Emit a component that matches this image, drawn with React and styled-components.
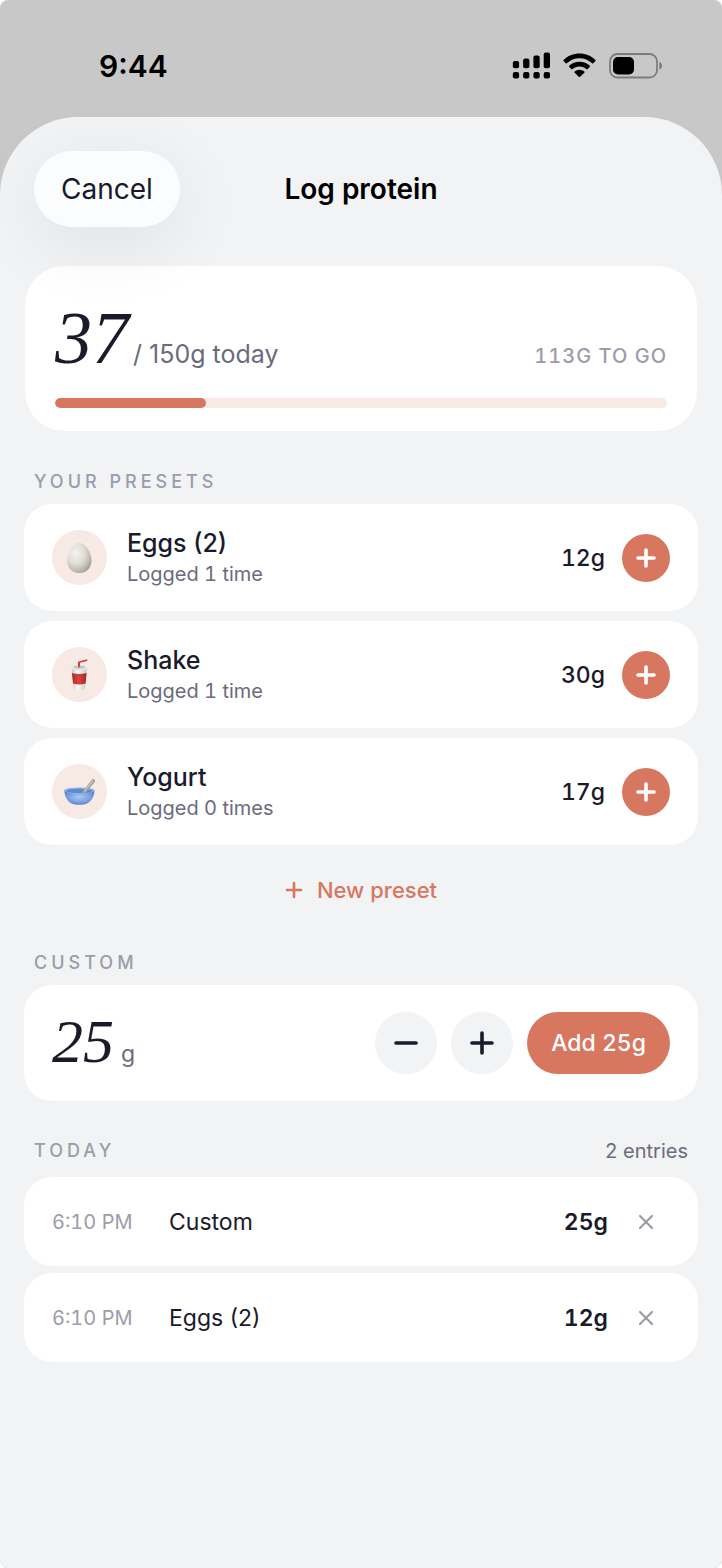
import React, { useState } from "react";
import styled, { createGlobalStyle } from "styled-components";

const ink = "#1a1a2a";
const slate = "#6b6b7c";
const mute = "#9c9cab";
const coral = "#d8775f";
const blush = "#f7e9e4";
const mist = "#f2f3f5";

const GlobalStyle = createGlobalStyle`
  *, *::before, *::after { box-sizing: border-box; }
  html, body, #root { height: 100%; }
  body { margin: 0; background: #fff; color: ${ink}; font-family: Inter, "Liberation Sans", sans-serif; }
  button { font: inherit; color: inherit; border: 0; padding: 0; background: none; cursor: pointer; }
  h1, h2, p, ul { margin: 0; padding: 0; font-weight: inherit; font-size: inherit; }
  ul { list-style: none; }
  svg { display: block; }
`;

const Screen = styled.div`
  min-height: 100%;
  display: flex;
  flex-direction: column;
  background: #c8c8c8;
  border-radius: 8px;
  overflow: hidden;
`;

const StatusBar = styled.header`
  display: flex;
  align-items: center;
  justify-content: space-between;
  height: 117px;
  padding: 14px 59px 0 99px;
  color: #000;
`;

const Clock = styled.span`
  font-size: 30px;
  line-height: 40px;
  font-weight: 600;
`;

const StatusIcons = styled.div`
  display: flex;
  align-items: center;
  gap: 13px;
`;

const Sheet = styled.main`
  flex: 1;
  background: ${mist};
  border-radius: 78px 78px 0 0;
  padding: 34px 24px;
`;

const TopBar = styled.div`
  display: grid;
  grid-template-columns: 1fr auto 1fr;
  align-items: center;
  padding: 0 10px;
`;

const CancelButton = styled.button`
  justify-self: start;
  height: 76px;
  padding: 0 27px;
  border-radius: 38px;
  background: #fbfcfe;
  box-shadow: 0 16px 72px rgba(0, 0, 0, 0.08);
  font-size: 28px;
`;

const Title = styled.h1`
  font-size: 28px;
  line-height: 36px;
  font-weight: 600;
  color: #000;
`;

const Card = styled.section`
  background: #fff;
  border-radius: ${(p) => (p.$large ? 40 : 28)}px;
`;

const SummaryCard = styled(Card)`
  margin-top: 38px;
  padding: 36px 30px 23px;
  border: 1px solid #f8f1f0;
  background: rgba(255, 255, 255, 0.96);
`;

const SummaryRow = styled.div`
  display: flex;
  align-items: baseline;
  justify-content: space-between;
`;

const Amount = styled.p`
  display: flex;
  align-items: baseline;
  gap: ${(p) => (p.$large ? 4 : 7)}px;
  padding-bottom: 4px;
  color: ${slate};
  font-size: ${(p) => (p.$large ? 25 : 23)}px;
`;

const Numeral = styled.span`
  font-family: "Liberation Serif", serif;
  font-style: italic;
  font-size: ${(p) => (p.$large ? 74 : 62)}px;
  line-height: 72px;
  color: ${ink};
`;

const Remaining = styled.span`
  font-size: 20px;
  font-weight: 500;
  font-variant-numeric: tabular-nums;
  letter-spacing: 1px;
  color: ${mute};
`;

const Track = styled.div`
  height: 10px;
  margin-top: 20px;
  border-radius: 5px;
  background: ${blush};
  overflow: hidden;
`;

const Fill = styled.div`
  height: 100%;
  border-radius: 5px;
  background: ${coral};
`;

const SectionHead = styled.div`
  display: flex;
  align-items: center;
  justify-content: space-between;
  padding: 0 10px;
  margin-top: 36px;
  margin-bottom: ${(p) => p.$gap || 8}px;
  line-height: 28px;
`;

const SectionTitle = styled.h2`
  font-size: 18px;
  font-weight: 500;
  letter-spacing: 4px;
  color: ${mute};
`;

const Count = styled.span`
  font-size: 20px;
  font-variant-numeric: tabular-nums;
  color: ${slate};
`;

const List = styled.ul`
  display: flex;
  flex-direction: column;
  gap: ${(p) => p.$gap}px;
`;

const PresetRow = styled(Card).attrs({ as: "li" })`
  display: flex;
  align-items: center;
  height: 107px;
  padding: 0 28px;
`;

const Avatar = styled.span`
  flex: none;
  display: grid;
  place-items: center;
  width: 55px;
  height: 55px;
  margin-right: 20px;
  border-radius: 50%;
  background: ${blush};
`;

const PresetText = styled.div`
  flex: 1;
  min-width: 0;
`;

const PresetName = styled.p`
  font-size: 25px;
  line-height: 32px;
  font-weight: 500;
`;

const PresetMeta = styled.p`
  font-size: 20px;
  line-height: 30px;
  font-variant-numeric: tabular-nums;
  color: ${slate};
`;

const Grams = styled.span`
  font-size: 23px;
  font-weight: ${(p) => p.$weight || 500};
  font-variant-numeric: tabular-nums;
`;

const RoundButton = styled.button`
  flex: none;
  display: grid;
  place-items: center;
  width: ${(p) => p.$size}px;
  height: ${(p) => p.$size}px;
  border-radius: 50%;
  background: ${(p) => (p.$accent ? coral : mist)};
  color: ${(p) => (p.$accent ? "#fff" : ink)};
`;

const NewPreset = styled.button`
  display: flex;
  align-items: center;
  gap: 14px;
  height: 46px;
  margin: 22px auto 0;
  color: ${coral};
  font-size: 22px;
  font-weight: 500;
`;

const CustomCard = styled(Card)`
  display: flex;
  align-items: center;
  justify-content: space-between;
  height: 116px;
  padding: 0 28px;
`;

const Controls = styled.div`
  display: flex;
  align-items: center;
  gap: ${(p) => p.$gap || 14}px;
`;

const AddButton = styled.button`
  height: 62px;
  padding: 0 24px;
  border-radius: 31px;
  background: ${coral};
  color: #fff;
  font-size: 23px;
  font-weight: 500;
  font-variant-numeric: tabular-nums;
`;

const EntryRow = styled(Card).attrs({ as: "li" })`
  display: flex;
  align-items: center;
  height: 89px;
  padding: 0 28px;
`;

const Time = styled.time`
  width: 117px;
  font-size: 20px;
  font-variant-numeric: tabular-nums;
  color: ${mute};
`;

const EntryName = styled.span`
  flex: 1;
  font-size: 23px;
`;

const RemoveButton = styled.button`
  display: grid;
  place-items: center;
  width: 48px;
  height: 48px;
  margin-left: 14px;
  color: ${mute};
`;

const Plus = ({ size, stroke }) => (
  <svg width={size} height={size} viewBox={`0 0 ${size} ${size}`} fill="none" stroke="currentColor" strokeWidth={stroke} strokeLinecap="round" aria-hidden="true">
    <path d={`M2 ${size / 2}H${size - 2}M${size / 2} 2V${size - 2}`} />
  </svg>
);

const Minus = () => (
  <svg width="26" height="26" viewBox="0 0 26 26" fill="none" stroke="currentColor" strokeWidth="3.6" strokeLinecap="round" aria-hidden="true">
    <path d="M3 13H23" />
  </svg>
);

const Cross = () => (
  <svg width="16" height="16" viewBox="0 0 16 16" fill="none" stroke="currentColor" strokeWidth="2.2" strokeLinecap="round" aria-hidden="true">
    <path d="M2 2L14 14M14 2L2 14" />
  </svg>
);

const Signal = () => (
  <svg width="38" height="28" viewBox="0 0 38 28" aria-label="Signal">
    {[[0.8, 9, 7.3], [11.1, 6.5, 9.8], [21.4, 3.5, 12.8], [31.7, 0.5, 15.8]].map(([x, y, h]) => (
      <g key={x}>
        <rect x={x} y={y} width="6.3" height={h} rx="2" />
        <rect x={x} y="20" width="6.3" height="6.5" rx="2" />
      </g>
    ))}
  </svg>
);

const Wifi = () => (
  <svg width="33" height="28" viewBox="0 0 33 28" aria-label="Wi-Fi">
    <path d="M16.5 1.5C22.700 1.500 28.300 3.900 32.400 7.900Q33 8.500 32.400 9.100L30.300 11.200Q29.700 11.800 29.100 11.200C25.800 8.100 21.400 6.200 16.500 6.200S7.200 8.100 3.900 11.200Q3.300 11.800 2.700 11.200L.6 9.100Q0 8.500 .6 7.900C4.700 3.900 10.300 1.500 16.500 1.500Z" />
    <path d="M16.500 9.700C20.500 9.700 24.100 11.200 26.800 13.700Q27.400 14.300 26.800 14.900L24.600 17.100Q24 17.700 23.400 17.100C21.600 15.400 19.200 14.400 16.500 14.400S11.400 15.400 9.600 17.100Q9 17.700 8.400 17.100L6.200 14.900Q5.600 14.300 6.200 13.700C8.900 11.200 12.500 9.700 16.500 9.700Z" />
    <path d="M16.500 17.700C18.400 17.700 20 18.400 21.300 19.500Q21.900 20.100 21.300 20.700L17.200 24.800Q16.500 25.400 15.800 24.800L11.700 20.700Q11.100 20.100 11.700 19.500C13 18.400 14.600 17.700 16.500 17.700Z" />
  </svg>
);

const Battery = () => (
  <svg width="54" height="26" viewBox="0 0 54 26" aria-label="Battery">
    <rect x="1" y="1" width="47" height="23.500" rx="7.500" fill="none" stroke="#7c7c7c" strokeWidth="1.800" />
    <rect x="4" y="4" width="21" height="17.500" rx="5" />
    <path d="M50.300 9C52 9.600 53 11 53 12.800S52 16 50.300 16.600Z" fill="#7c7c7c" />
  </svg>
);

const Egg = () => (
  <svg width="32" height="32" viewBox="0 0 32 32" aria-hidden="true">
    <defs>
      <radialGradient id="eggShell" cx="0.36" cy="0.34" r="0.7">
        <stop offset="0" stopColor="#f4f3ef" />
        <stop offset="0.5" stopColor="#e0ded7" />
        <stop offset="0.85" stopColor="#bdbab0" />
        <stop offset="1" stopColor="#a5a196" />
      </radialGradient>
    </defs>
    <path d="M15.300 1C21 1 27.500 10 27.500 18.500C27.500 26 22.500 31 15.300 31S3.200 26 3.200 18.500C3.200 10 9.500 1 15.300 1Z" fill="url(#eggShell)" />
  </svg>
);

const Cup = () => (
  <svg width="32" height="32" viewBox="0 0 32 32" aria-hidden="true">
    <defs>
      <linearGradient id="cupBody" x1="0" x2="1">
        <stop offset="0" stopColor="#c9c9c8" />
        <stop offset="0.4" stopColor="#fafafa" />
        <stop offset="1" stopColor="#c4c3c2" />
      </linearGradient>
      <linearGradient id="cupBand" x1="0" x2="1">
        <stop offset="0" stopColor="#a92b27" />
        <stop offset="0.45" stopColor="#d8443c" />
        <stop offset="1" stopColor="#a32723" />
      </linearGradient>
    </defs>
    <path d="M15 8V3.200L22.500 1.200" fill="none" stroke="#c93c38" strokeWidth="1.700" strokeLinejoin="round" strokeLinecap="round" />
    <path d="M7.700 8H22.800L21 29Q20.700 31.500 15.300 31.500T9.600 29Z" fill="url(#cupBody)" />
    <path d="M7.900 14Q15.300 15.800 22.600 14L21.600 24.400Q15.300 26.600 9 24.400Z" fill="url(#cupBand)" />
    <ellipse cx="15.300" cy="8.700" rx="8" ry="2.700" fill="#e5e5e4" />
    <ellipse cx="15.300" cy="8.100" rx="5.800" ry="1.600" fill="#c4c3c2" />
    <path d="M15 8.300V4" stroke="#c93c38" strokeWidth="1.700" />
  </svg>
);

const Bowl = () => (
  <svg width="32" height="32" viewBox="0 0 32 32" aria-hidden="true">
    <defs>
      <radialGradient id="bowlBody" cx="0.5" cy="0.45" r="0.55">
        <stop offset="0" stopColor="#a9c8f3" />
        <stop offset="0.6" stopColor="#7fa6e2" />
        <stop offset="1" stopColor="#5a83cb" />
      </radialGradient>
    </defs>
    <path d="M.3 14.500C.5 21.500 5 27.500 10 28.300Q15.300 29.300 20.500 28.300C26 27.300 30.300 21.500 30.500 14.500Z" fill="url(#bowlBody)" />
    <ellipse cx="15.400" cy="14.500" rx="15.200" ry="3.100" fill="#8fb3ea" />
    <ellipse cx="15.400" cy="14.900" rx="13.200" ry="2.100" fill="#5f88cf" />
    <path d="M18 16.500L27.300 4.200Q28.800 2.400 30.400 3.500T30.400 6.500L21.500 16.800Q19.500 18.500 18 16.500Z" fill="#a39f9f" />
    <path d="M20.500 15L28.700 5" stroke="#c8c4c3" strokeWidth="1.200" strokeLinecap="round" />
  </svg>
);

const PRESETS = [
  { name: "Eggs (2)", meta: "Logged 1 time", grams: 12, Icon: Egg },
  { name: "Shake", meta: "Logged 1 time", grams: 30, Icon: Cup },
  { name: "Yogurt", meta: "Logged 0 times", grams: 17, Icon: Bowl },
];

const ENTRIES = [
  { time: "6:10 PM", name: "Custom", grams: 25 },
  { time: "6:10 PM", name: "Eggs (2)", grams: 12 },
];

const GOAL = 150;

export default function App() {
  const [entries, setEntries] = useState(ENTRIES);
  const [custom, setCustom] = useState(25);
  const total = entries.reduce((sum, e) => sum + e.grams, 0);
  const log = (name, grams) => setEntries([{ time: "6:10 PM", name, grams }, ...entries]);

  return (
    <>
      <GlobalStyle />
      <Screen>
        <StatusBar>
          <Clock>9:44</Clock>
          <StatusIcons>
            <Signal />
            <Wifi />
            <Battery />
          </StatusIcons>
        </StatusBar>
        <Sheet>
          <TopBar>
            <CancelButton type="button">Cancel</CancelButton>
            <Title>Log protein</Title>
          </TopBar>

          <SummaryCard $large>
            <SummaryRow>
              <Amount $large>
                <Numeral $large>{total}</Numeral>
                <span>/ {GOAL}g today</span>
              </Amount>
              <Remaining>{Math.max(GOAL - total, 0)}G TO GO</Remaining>
            </SummaryRow>
            <Track>
              <Fill style={{ width: `${Math.min(100, (total / GOAL) * 100)}%` }} />
            </Track>
          </SummaryCard>

          <SectionHead>
            <SectionTitle>YOUR PRESETS</SectionTitle>
          </SectionHead>
          <List $gap={10}>
            {PRESETS.map(({ name, meta, grams, Icon }) => (
              <PresetRow key={name}>
                <Avatar><Icon /></Avatar>
                <PresetText>
                  <PresetName>{name}</PresetName>
                  <PresetMeta>{meta}</PresetMeta>
                </PresetText>
                <Controls $gap={17}>
                  <Grams>{grams}g</Grams>
                  <RoundButton type="button" $size={48} $accent aria-label={`Log ${name}`} onClick={() => log(name, grams)}>
                    <Plus size={20} stroke={3.6} />
                  </RoundButton>
                </Controls>
              </PresetRow>
            ))}
          </List>
          <NewPreset type="button">
            <Plus size={18} stroke={2.6} />
            New preset
          </NewPreset>

          <SectionHead>
            <SectionTitle>CUSTOM</SectionTitle>
          </SectionHead>
          <CustomCard>
            <Amount>
              <Numeral>{custom}</Numeral>
              <span>g</span>
            </Amount>
            <Controls>
              <RoundButton type="button" $size={62} aria-label="Decrease" onClick={() => setCustom(Math.max(5, custom - 5))}>
                <Minus />
              </RoundButton>
              <RoundButton type="button" $size={62} aria-label="Increase" onClick={() => setCustom(custom + 5)}>
                <Plus size={24} stroke={3.6} />
              </RoundButton>
              <AddButton type="button" onClick={() => log("Custom", custom)}>Add {custom}g</AddButton>
            </Controls>
          </CustomCard>

          <SectionHead $gap={12}>
            <SectionTitle>TODAY</SectionTitle>
            <Count>{entries.length} entries</Count>
          </SectionHead>
          <List $gap={7}>
            {entries.map((e, i) => (
              <EntryRow key={i}>
                <Time>{e.time}</Time>
                <EntryName>{e.name}</EntryName>
                <Grams $weight={600}>{e.grams}g</Grams>
                <RemoveButton type="button" aria-label={`Remove ${e.name}`} onClick={() => setEntries(entries.filter((_, j) => j !== i))}>
                  <Cross />
                </RemoveButton>
              </EntryRow>
            ))}
          </List>
        </Sheet>
      </Screen>
    </>
  );
}
